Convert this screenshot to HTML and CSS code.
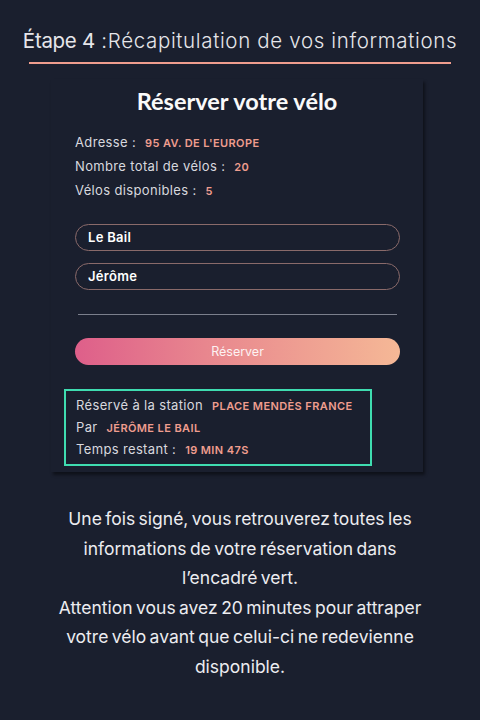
FILE: index.html
```html
<!DOCTYPE html>
<html lang="fr">
<head>
<meta charset="utf-8">
<link rel="stylesheet" href="styles.css">
</head>
<body>
<div class="page">
  <h1 class="step"><span class="step-num">Étape 4</span> :Récapitulation de vos informations</h1>
  <div class="rule"></div>
  <div class="card">
    <h2 class="card-title">Réserver votre vélo</h2>
    <div class="info">
      <p class="line">Adresse : <span class="val">95 AV. DE L'EUROPE</span></p>
      <p class="line">Nombre total de vélos : <span class="val">20</span></p>
      <p class="line">Vélos disponibles : <span class="val">5</span></p>
    </div>
    <div class="field">Le Bail</div>
    <div class="field">Jérôme</div>
    <div class="sig"></div>
    <div class="btn">Réserver</div>
    <div class="resa">
      <p class="line">Réservé à la station <span class="val">PLACE MENDÈS FRANCE</span></p>
      <p class="line">Par <span class="val">JÉRÔME LE BAIL</span></p>
      <p class="line">Temps restant : <span class="val">19 MIN 47S</span></p>
    </div>
  </div>
  <p class="note">Une fois signé, vous retrouverez toutes les informations de votre réservation dans l’encadré vert.<br>Attention vous avez 20 minutes pour attraper votre vélo avant que celui-ci ne redevienne disponible.</p>
</div>
</body>
</html>
```
FILE: styles.css
```css
html, body {
  margin: 0;
  padding: 0;
  background: #1a1f2e;
  color: #e8e8ec;
  font-family: Inter, "DejaVu Sans", sans-serif;
}
.page {
  width: 480px;
  height: 720px;
  display: flex;
  flex-direction: column;
  align-items: center;
  padding-top: 28px;
  box-sizing: border-box;
}
.step {
  margin: 0;
  font-weight: 300;
  font-size: 20.5px;
  letter-spacing: 0.65px;
  color: #e6e6ea;
  line-height: 26px;
  white-space: nowrap;
}
.step-num { letter-spacing: -0.3px; font-weight: 400; }
.rule {
  width: 422px;
  height: 2px;
  background: #ef9d8e;
  margin-top: 8px;
}
.card {
  width: 372px;
  margin-top: 15px;
  margin-left: -6px;
  box-sizing: border-box;
  padding: 9px 0 0 0;
  height: 393px;
  box-shadow: 2px 3px 3px rgba(0, 0, 0, 0.45);
  display: flex;
  flex-direction: column;
}
.card-title {
  margin: 0;
  text-align: center;
  font-family: Lato, sans-serif;
  font-weight: 700;
  font-size: 23.5px;
  color: #fafafa;
  line-height: 26px;
}
.info {
  margin: 20px 0 0 24px;
  display: flex;
  flex-direction: column;
  gap: 7px;
}
.line {
  margin: 0;
  font-size: 13px;
  letter-spacing: 0.35px;
  line-height: 16px;
  color: #d8d8de;
}
.val {
  color: #ef9d8e;
  font-weight: 600;
  font-size: 11px;
  letter-spacing: 0.4px;
  margin-left: 5px;
}
.field {
  margin: 25px 0 0 24px;
  width: 325px;
  height: 27px;
  box-sizing: border-box;
  border: 1.5px solid #8a6a6a;
  border-radius: 14px;
  padding-left: 12px;
  font-size: 13px;
  font-weight: 600;
  letter-spacing: 0.3px;
  line-height: 24px;
  color: #ffffff;
}
.field + .field { margin-top: 12px; }
.sig {
  margin: 24px 0 0 27px;
  width: 319px;
  height: 1px;
  background: #7b7f8c;
}
.btn {
  margin: 23px 0 0 24px;
  width: 325px;
  height: 27px;
  border-radius: 14px;
  background: linear-gradient(90deg, #de5f8a 0%, #e8868e 40%, #f5b896 100%);
  text-align: center;
  font-size: 12.5px;
  line-height: 27px;
  color: #fdf2f2;
}
.resa {
  margin: 24px 0 0 13px;
  width: 308px;
  box-sizing: border-box;
  border: 2px solid #3fdcb0;
  padding: 6px 0 6px 10px;
  display: flex;
  flex-direction: column;
  gap: 5px;
}
.note {
  margin: 32px 0 0 0;
  width: 384px;
  text-align: center;
  font-size: 17.5px;
  line-height: 29.6px;
  color: #ececf0;
  word-spacing: -1.5px;
}
```
